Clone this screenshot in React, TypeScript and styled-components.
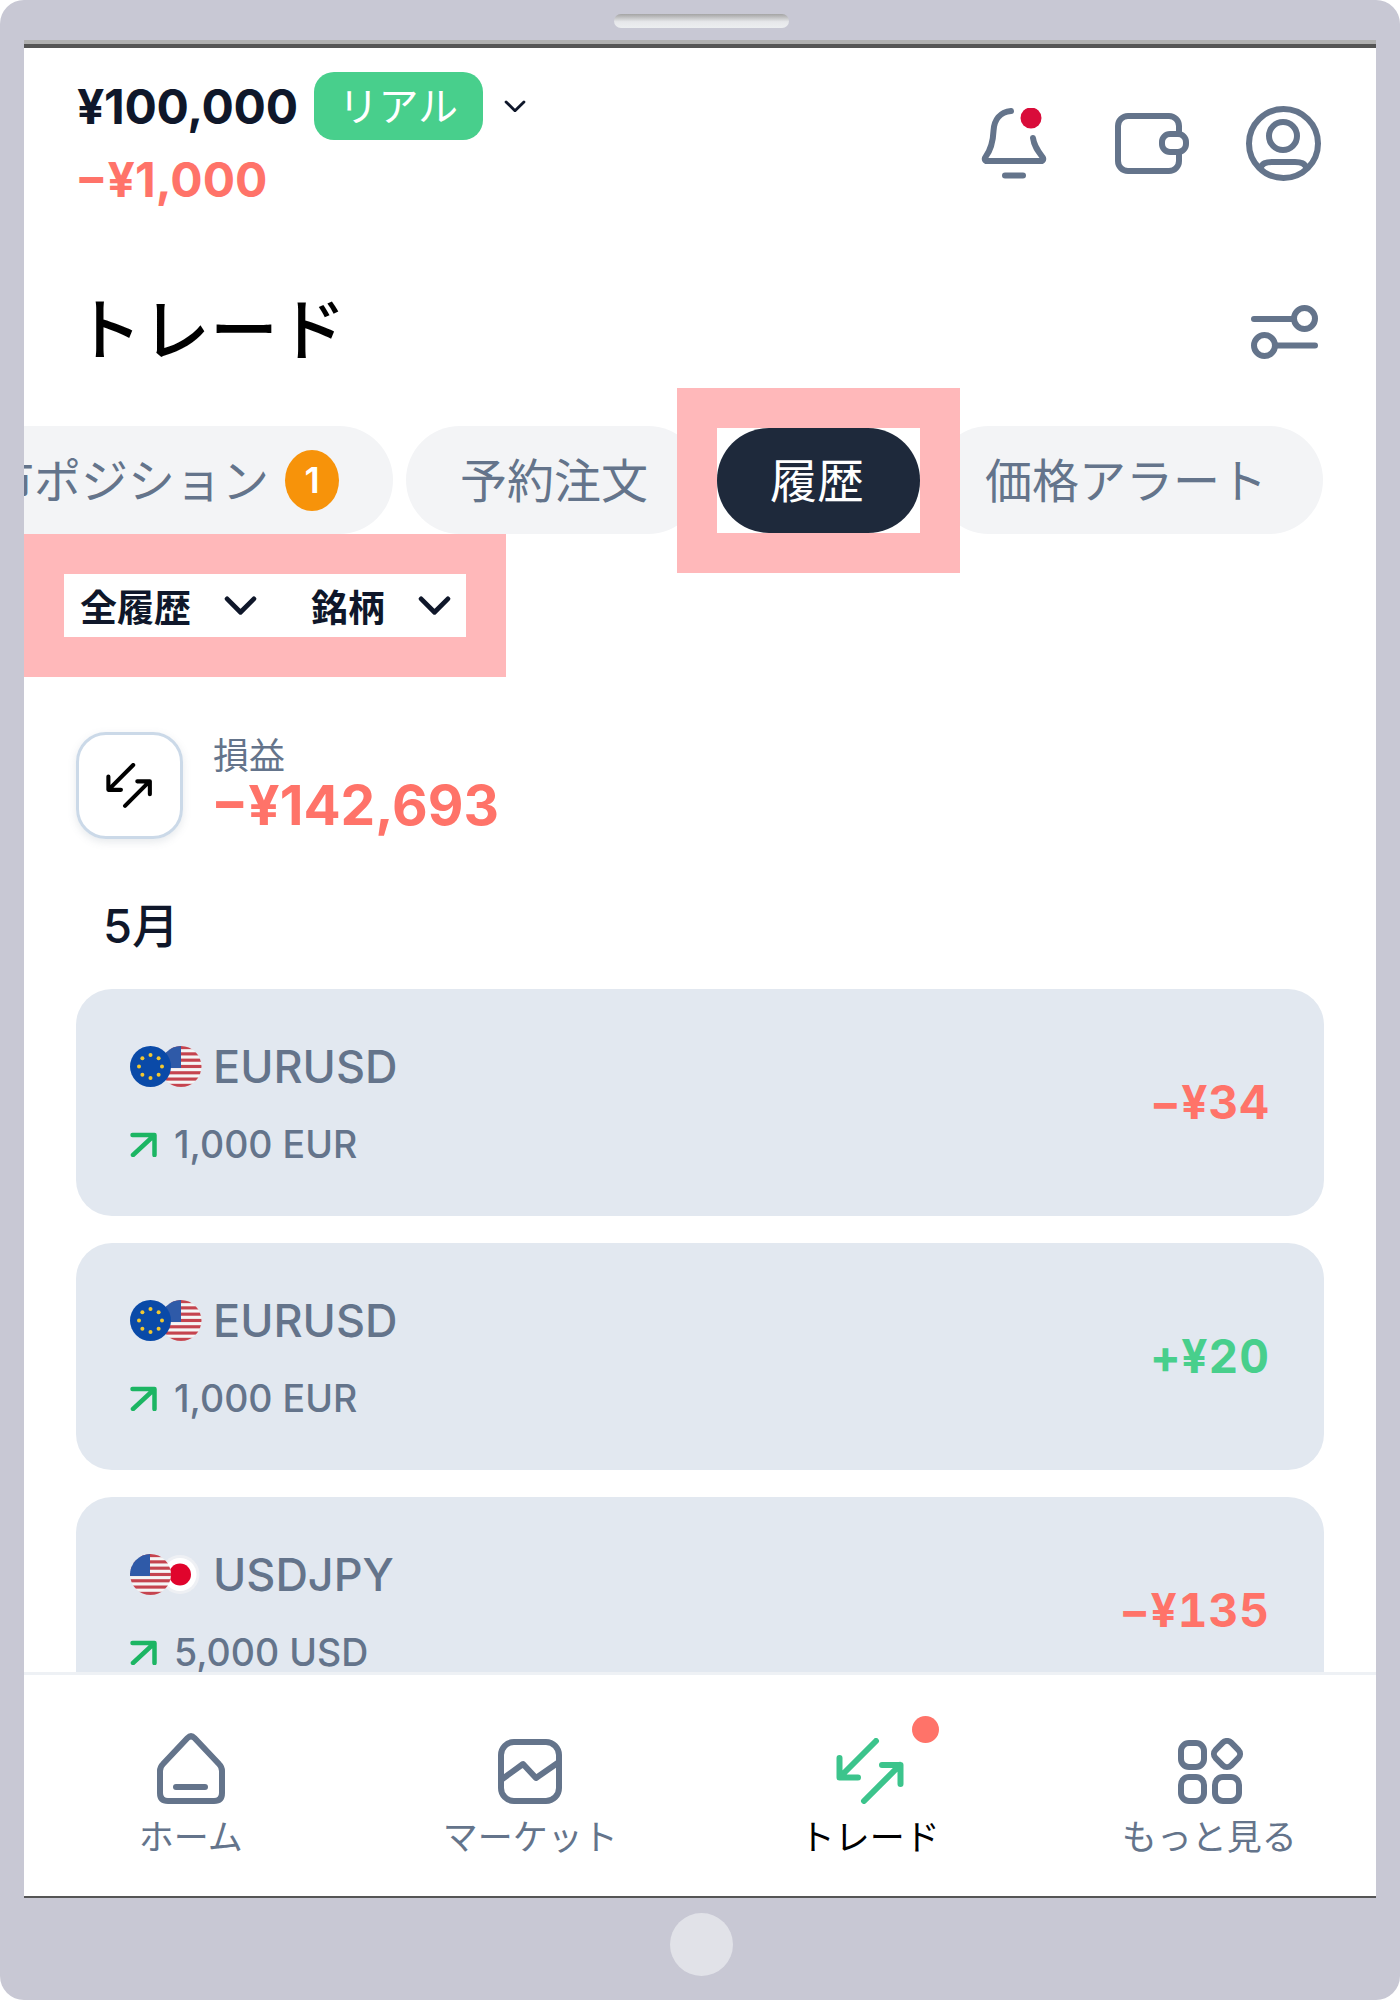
import React from "react";
import styled, { createGlobalStyle } from "styled-components";

const SLATE = "#64748b";
const RED = "#ff7369";
const GREEN = "#48cf8c";
const PINK = "#ffb8ba";

const GlobalStyle = createGlobalStyle`
  html, body {
    margin: 0;
    padding: 0;
    background: #fff;
  }
  body {
    font-family: "Inter", "Noto Sans CJK JP", sans-serif;
  }
  * {
    box-sizing: border-box;
  }
`;

type Trade = {
  pair: "EURUSD" | "USDJPY";
  size: string;
  profit: string;
  gain?: boolean;
};

const trades: Trade[] = [
  { pair: "EURUSD", size: "1,000 EUR", profit: "−¥34" },
  { pair: "EURUSD", size: "1,000 EUR", profit: "+¥20", gain: true },
  { pair: "USDJPY", size: "5,000 USD", profit: "−¥135" },
];

const Chevron = ({ size, weight }: { size: number; weight: number }) => (
  <svg width={size} height={size * 0.58} viewBox="0 0 34 20" fill="none">
    <path d="M3 3l14 14L31 3" stroke="#0f172a" strokeWidth={weight} strokeLinecap="round" strokeLinejoin="round" />
  </svg>
);

const BellIcon = () => (
  <svg width="67" height="71" viewBox="0 0 67 71" fill="none" stroke={SLATE} strokeWidth="6" strokeLinecap="round" strokeLinejoin="round">
    <path d="M31 3C20 4 14 12 13.5 23C13 35 10 43 5.5 49C4 51 5 53 7 53H61C63 53 64 51 62.5 49C58 43 54 38 53 30" />
    <path d="M25 67.5H43" />
    <circle cx="51" cy="10" r="10.5" fill="#d90c3a" stroke="none" />
  </svg>
);

const WalletIcon = () => (
  <svg width="74" height="61" viewBox="0 0 74 61" fill="none" stroke={SLATE} strokeWidth="6">
    <rect x="3" y="3" width="61" height="55" rx="10" />
    <rect x="47" y="21" width="24" height="18" rx="8" fill="#fff" />
  </svg>
);

const UserIcon = () => (
  <svg width="75" height="75" viewBox="0 0 75 75" fill="none" stroke={SLATE} strokeWidth="6">
    <circle cx="37.5" cy="37.5" r="34.5" />
    <circle cx="37" cy="30" r="14" />
    <path d="M14 63C16 57 20 56 26 56H49C55 56 59 57 61 63" />
  </svg>
);

const SlidersIcon = () => (
  <svg width="67" height="54" viewBox="0 0 67 54" fill="none" stroke={SLATE} strokeWidth="6" strokeLinecap="round">
    <path d="M3 14H43" />
    <circle cx="53.5" cy="13.5" r="10.5" />
    <path d="M24 40.5H64" />
    <circle cx="13.5" cy="40.5" r="10.5" />
  </svg>
);

const TradeIcon = ({ color, scale = 1 }: { color: string; scale?: number }) => (
  <svg width={68 * scale} height={66 * scale} viewBox="0 0 68 66" fill="none" stroke={color} strokeWidth="6" strokeLinecap="round" strokeLinejoin="round">
    <path d="M40 3L5 38M3.5 20V39.5H22" />
    <path d="M28 63L64 27M46 27H64.5V46" />
  </svg>
);

const HomeIcon = () => (
  <svg width="68" height="71" viewBox="0 0 68 71" fill="none" stroke={SLATE} strokeWidth="6" strokeLinecap="round" strokeLinejoin="round">
    <path d="M30.5 5Q34 1.5 37.5 5L62 31Q65 34 65 38V60Q65 68 57 68H11Q3 68 3 60V38Q3 34 6 31Z" />
    <path d="M19 54H48" />
  </svg>
);

const MarketIcon = () => (
  <svg width="64" height="65" viewBox="0 0 64 65" fill="none" stroke={SLATE} strokeWidth="6" strokeLinejoin="round">
    <rect x="3" y="3" width="58" height="59" rx="13" />
    <path d="M3 41L25 25L38 39L61 23" />
  </svg>
);

const MoreIcon = () => (
  <svg width="70" height="66" viewBox="-4 0 70 66" fill="none" stroke={SLATE} strokeWidth="6">
    <rect x="3" y="5" width="23" height="24" rx="8" />
    <rect x="3" y="39" width="23" height="24" rx="8" />
    <rect x="37" y="39" width="24" height="24" rx="8" />
    <rect x="-11" y="-11" width="22" height="22" rx="6" transform="translate(49 16) rotate(45)" />
  </svg>
);

const UpRightIcon = () => (
  <svg width="27" height="25" viewBox="0 0 27 25" fill="none" stroke="#1cb563" strokeWidth="4.5" strokeLinecap="round" strokeLinejoin="round">
    <path d="M2.5 3H24.5V23M24 3.5L3 23" />
  </svg>
);

const Stripes = ({ x, id }: { x: number; id: string }) => (
  <g clipPath={`url(#${id})`}>
    <rect x={x} y="0" width="41" height="41" fill="#f5f5f5" />
    {[0, 6.3, 12.6, 18.9, 25.2, 31.5, 37.8].map((y) => (
      <rect key={y} x={x} y={y} width="41" height="3.15" fill="#c5444f" />
    ))}
    <rect x={x} y="0" width="20" height="22" fill="#2f5aa8" />
  </g>
);

const euStars = Array.from({ length: 8 }, (_, i) => {
  const a = (i * Math.PI) / 4;
  return [20.5 + Math.sin(a) * 11.5, 20.5 - Math.cos(a) * 11.5];
});

const FlagPair = ({ pair, id }: { pair: Trade["pair"]; id: string }) =>
  pair === "EURUSD" ? (
    <svg width="72" height="41" viewBox="0 0 72 41">
      <defs>
        <clipPath id={id}>
          <circle cx="51" cy="20.5" r="20.5" />
        </clipPath>
      </defs>
      <Stripes x={31} id={id} />
      <circle cx="20.5" cy="20.5" r="20.5" fill="#0a4aa8" />
      {euStars.map(([cx, cy]) => (
        <circle key={`${cx}-${cy}`} cx={cx} cy={cy} r="2" fill="#f2c830" />
      ))}
    </svg>
  ) : (
    <svg width="72" height="41" viewBox="0 0 72 41">
      <defs>
        <clipPath id={id}>
          <circle cx="20.5" cy="20.5" r="20.5" />
        </clipPath>
      </defs>
      <circle cx="50" cy="20.5" r="19.5" fill="#eef0f4" />
      <circle cx="50" cy="20.5" r="16.5" fill="#fff" />
      <circle cx="50" cy="20.5" r="11" fill="#e0042c" />
      <Stripes x={0} id={id} />
    </svg>
  );

const App = () => (
  <>
    <GlobalStyle />
    <Device>
      <Speaker />
      <Screen>
        <Header>
          <Account>
            <BalanceRow>
              <Balance>¥100,000</Balance>
              <ModeBadge>リアル</ModeBadge>
              <BalanceChevron>
                <Chevron size={22} weight={4.5} />
              </BalanceChevron>
            </BalanceRow>
            <DayLoss>−¥1,000</DayLoss>
          </Account>
          <HeaderIcons>
            <BellSlot>
              <BellIcon />
            </BellSlot>
            <WalletIcon />
            <UserIcon />
          </HeaderIcons>
        </Header>

        <TitleRow>
          <Title>トレード</Title>
          <SlidersIcon />
        </TitleRow>

        <TabStrip>
          <Tab>
            市ポジション
            <CountBadge>1</CountBadge>
          </Tab>
          <Tab>予約注文</Tab>
          <ActiveFrame>
            <ActiveTab>履歴</ActiveTab>
          </ActiveFrame>
          <AlertTab>価格アラート</AlertTab>
        </TabStrip>

        <Filters>
          <Filter>
            全履歴
            <Chevron size={33} weight={5} />
          </Filter>
          <Filter>
            銘柄
            <Chevron size={33} weight={5} />
          </Filter>
        </Filters>

        <Summary>
          <SummaryIcon>
            <TradeIcon color="#000" scale={0.68} />
          </SummaryIcon>
          <SummaryText>
            <SummaryLabel>損益</SummaryLabel>
            <SummaryValue>−¥142,693</SummaryValue>
          </SummaryText>
        </Summary>

        <Month>5月</Month>

        <TradeList>
          {trades.map((trade, i) => (
            <TradeCard key={i}>
              <div>
                <PairRow>
                  <FlagPair pair={trade.pair} id={`flag-${i}`} />
                  <PairName>{trade.pair}</PairName>
                </PairRow>
                <SizeRow>
                  <UpRightIcon />
                  <span>{trade.size}</span>
                </SizeRow>
              </div>
              <Profit $gain={trade.gain}>{trade.profit}</Profit>
            </TradeCard>
          ))}
        </TradeList>

        <BottomNav>
          <NavItem>
            <NavIcon>
              <HomeIcon />
            </NavIcon>
            ホーム
          </NavItem>
          <NavItem>
            <NavIcon>
              <MarketIcon />
            </NavIcon>
            マーケット
          </NavItem>
          <NavItem $active>
            <NavIcon>
              <TradeIcon color="#3cc48c" />
              <NavDot />
            </NavIcon>
            トレード
          </NavItem>
          <NavItem>
            <NavIcon>
              <MoreIcon />
            </NavIcon>
            もっと見る
          </NavItem>
        </BottomNav>
      </Screen>
      <HomeButton />
    </Device>
  </>
);

const Device = styled.div`
  width: 1400px;
  height: 2000px;
  padding: 14px 24px 24px;
  border-radius: 24px;
  background: #c8c8d4;
  display: flex;
  flex-direction: column;
  align-items: center;
`;

const Speaker = styled.div`
  width: 175px;
  height: 14px;
  margin: 0 0 12px 2px;
  border-radius: 7px;
  background: linear-gradient(180deg, #a4a4a4, #e6e7ea 55%, #eceef0);
`;

const Screen = styled.div`
  width: 1352px;
  height: 1858px;
  flex: none;
  background: #fff;
  border-top: 4px solid #b0b0b0;
  border-bottom: 2px solid #555;
  overflow: hidden;
  display: flex;
  flex-direction: column;
  position: relative;

  &::before {
    content: "";
    display: block;
    height: 4px;
    flex: none;
    background: #555;
  }
`;

const HomeButton = styled.div`
  width: 63px;
  height: 63px;
  flex: none;
  margin: 15px 0 0 2px;
  border-radius: 50%;
  background: #e1e2e8;
`;

const Header = styled.header`
  display: flex;
  justify-content: space-between;
  align-items: flex-start;
  padding: 24px 55px 0 53px;
  flex: none;
`;

const Account = styled.div`
  display: flex;
  flex-direction: column;
`;

const BalanceRow = styled.div`
  display: flex;
  align-items: center;
  height: 68px;
`;

const Balance = styled.div`
  font-size: 48px;
  font-weight: 700;
  letter-spacing: -0.3px;
  color: #0f172a;
`;

const ModeBadge = styled.div`
  width: 169px;
  height: 68px;
  margin-left: 16px;
  padding-bottom: 4px;
  border-radius: 20px;
  background: ${GREEN};
  color: #fff;
  font-size: 40px;
  font-weight: 400;
  display: flex;
  align-items: center;
  justify-content: center;
`;

const BalanceChevron = styled.div`
  display: flex;
  margin-left: 21px;
`;

const DayLoss = styled.div`
  margin: 12px 0 0 -2px;
  font-size: 48px;
  line-height: 56px;
  font-weight: 700;
  color: ${RED};
`;

const HeaderIcons = styled.div`
  display: flex;
  align-items: center;
  gap: 57px;
  margin-top: 34px;
`;

const BellSlot = styled.div`
  display: flex;
  margin-right: 11px;
`;

const TitleRow = styled.div`
  flex: none;
  display: flex;
  align-items: center;
  justify-content: space-between;
  padding: 0 58px 0 50px;
  margin-top: 78px;
  height: 92px;
`;

const Title = styled.h1`
  margin: 0;
  padding-bottom: 4px;
  font-size: 68px;
  line-height: 88px;
  font-weight: 500;
  color: #000;
`;

const TabStrip = styled.div`
  flex: none;
  display: flex;
  align-items: center;
  gap: 13px;
  margin-top: 48px;
  margin-left: -91px;
`;

const Tab = styled.div`
  flex: none;
  height: 108px;
  padding: 0 54px 6px;
  border-radius: 54px;
  background: #f3f4f6;
  color: ${SLATE};
  font-size: 47px;
  display: flex;
  align-items: center;
  white-space: nowrap;
`;

const AlertTab = styled(Tab)`
  padding-left: 50px;
  padding-right: 56px;
`;

const ActiveFrame = styled.div`
  flex: none;
  width: 203px;
  height: 105px;
  margin: 0 2px;
  background: #fff;
  box-shadow: 0 0 0 40px ${PINK};
  position: relative;
  z-index: 1;
`;

const ActiveTab = styled.div`
  height: 100%;
  padding: 0 3px 6px 0;
  border-radius: 52px;
  background: #1e293b;
  color: #fff;
  font-size: 47px;
  display: flex;
  align-items: center;
  justify-content: center;
`;

const CountBadge = styled.span`
  width: 54px;
  height: 61px;
  margin: 6px 0 0 16px;
  border-radius: 50%;
  background: #f7930a;
  color: #fff;
  font-size: 36px;
  font-weight: 600;
  display: flex;
  align-items: center;
  justify-content: center;
`;

const Filters = styled.div`
  flex: none;
  align-self: flex-start;
  display: flex;
  align-items: center;
  gap: 54px;
  width: 402px;
  height: 63px;
  margin: 40px 0 0 40px;
  padding: 0 17px 0 16px;
  background: #fff;
  box-shadow: 0 0 0 40px ${PINK};
`;

const Filter = styled.div`
  display: flex;
  align-items: center;
  gap: 33px;
  font-size: 37px;
  font-weight: 700;
  color: #0f172a;
  white-space: nowrap;
`;

const Summary = styled.div`
  flex: none;
  display: flex;
  align-items: center;
  gap: 30px;
  margin: 95px 0 0 52px;
`;

const SummaryIcon = styled.div`
  width: 107px;
  height: 107px;
  border-radius: 30px;
  border: 3px solid #cbd9e8;
  box-shadow: 0 3px 8px rgba(100, 116, 139, 0.16);
  display: flex;
  align-items: center;
  justify-content: center;
`;

const SummaryText = styled.div`
  padding-bottom: 4px;
`;

const SummaryLabel = styled.div`
  font-size: 36px;
  line-height: 42px;
  color: ${SLATE};
`;

const SummaryValue = styled.div`
  margin-left: -2px;
  font-size: 55px;
  line-height: 56px;
  font-weight: 700;
  color: ${RED};
`;

const Month = styled.div`
  flex: none;
  margin: 55px 0 0 79px;
  font-size: 47px;
  line-height: 64px;
  font-weight: 500;
  color: #0f172a;
`;

const TradeList = styled.div`
  flex: 1;
  min-height: 0;
  overflow: hidden;
  display: flex;
  flex-direction: column;
  gap: 27px;
  margin-top: 31px;
  padding: 0 52px;
`;

const TradeCard = styled.div`
  flex: none;
  height: 227px;
  padding: 49px 54px 0;
  border-radius: 36px;
  background: #e2e8f0;
  display: flex;
  justify-content: space-between;
  align-items: flex-start;
`;

const PairRow = styled.div`
  display: flex;
  align-items: center;
  gap: 11px;
  height: 56px;
`;

const PairName = styled.span`
  font-size: 45px;
  font-weight: 500;
  color: ${SLATE};
`;

const SizeRow = styled.div`
  display: flex;
  align-items: center;
  gap: 17px;
  margin-top: 28px;
  font-size: 37.5px;
  font-weight: 500;
  color: ${SLATE};
`;

const Profit = styled.div<{ $gain?: boolean }>`
  margin-top: 36px;
  font-size: 46px;
  font-weight: 700;
  letter-spacing: 1px;
  font-feature-settings: "tnum";
  color: ${({ $gain }) => ($gain ? GREEN : RED)};
`;

const BottomNav = styled.nav`
  flex: none;
  height: 224px;
  margin-left: -3px;
  background: #fff;
  border-top: 3px solid #eef1f5;
  display: grid;
  grid-template-columns: repeat(4, 339.5px);
`;

const NavItem = styled.div<{ $active?: boolean }>`
  display: flex;
  flex-direction: column;
  align-items: center;
  padding-top: 53px;
  font-size: 35px;
  line-height: 46px;
  color: ${({ $active }) => ($active ? "#000" : SLATE)};
`;

const NavIcon = styled.div`
  height: 76px;
  display: flex;
  align-items: flex-end;
  position: relative;
  margin-bottom: 10px;
`;

const NavDot = styled.span`
  position: absolute;
  right: -35px;
  top: -12px;
  width: 27px;
  height: 27px;
  border-radius: 50%;
  background: ${RED};
`;

export default App;
